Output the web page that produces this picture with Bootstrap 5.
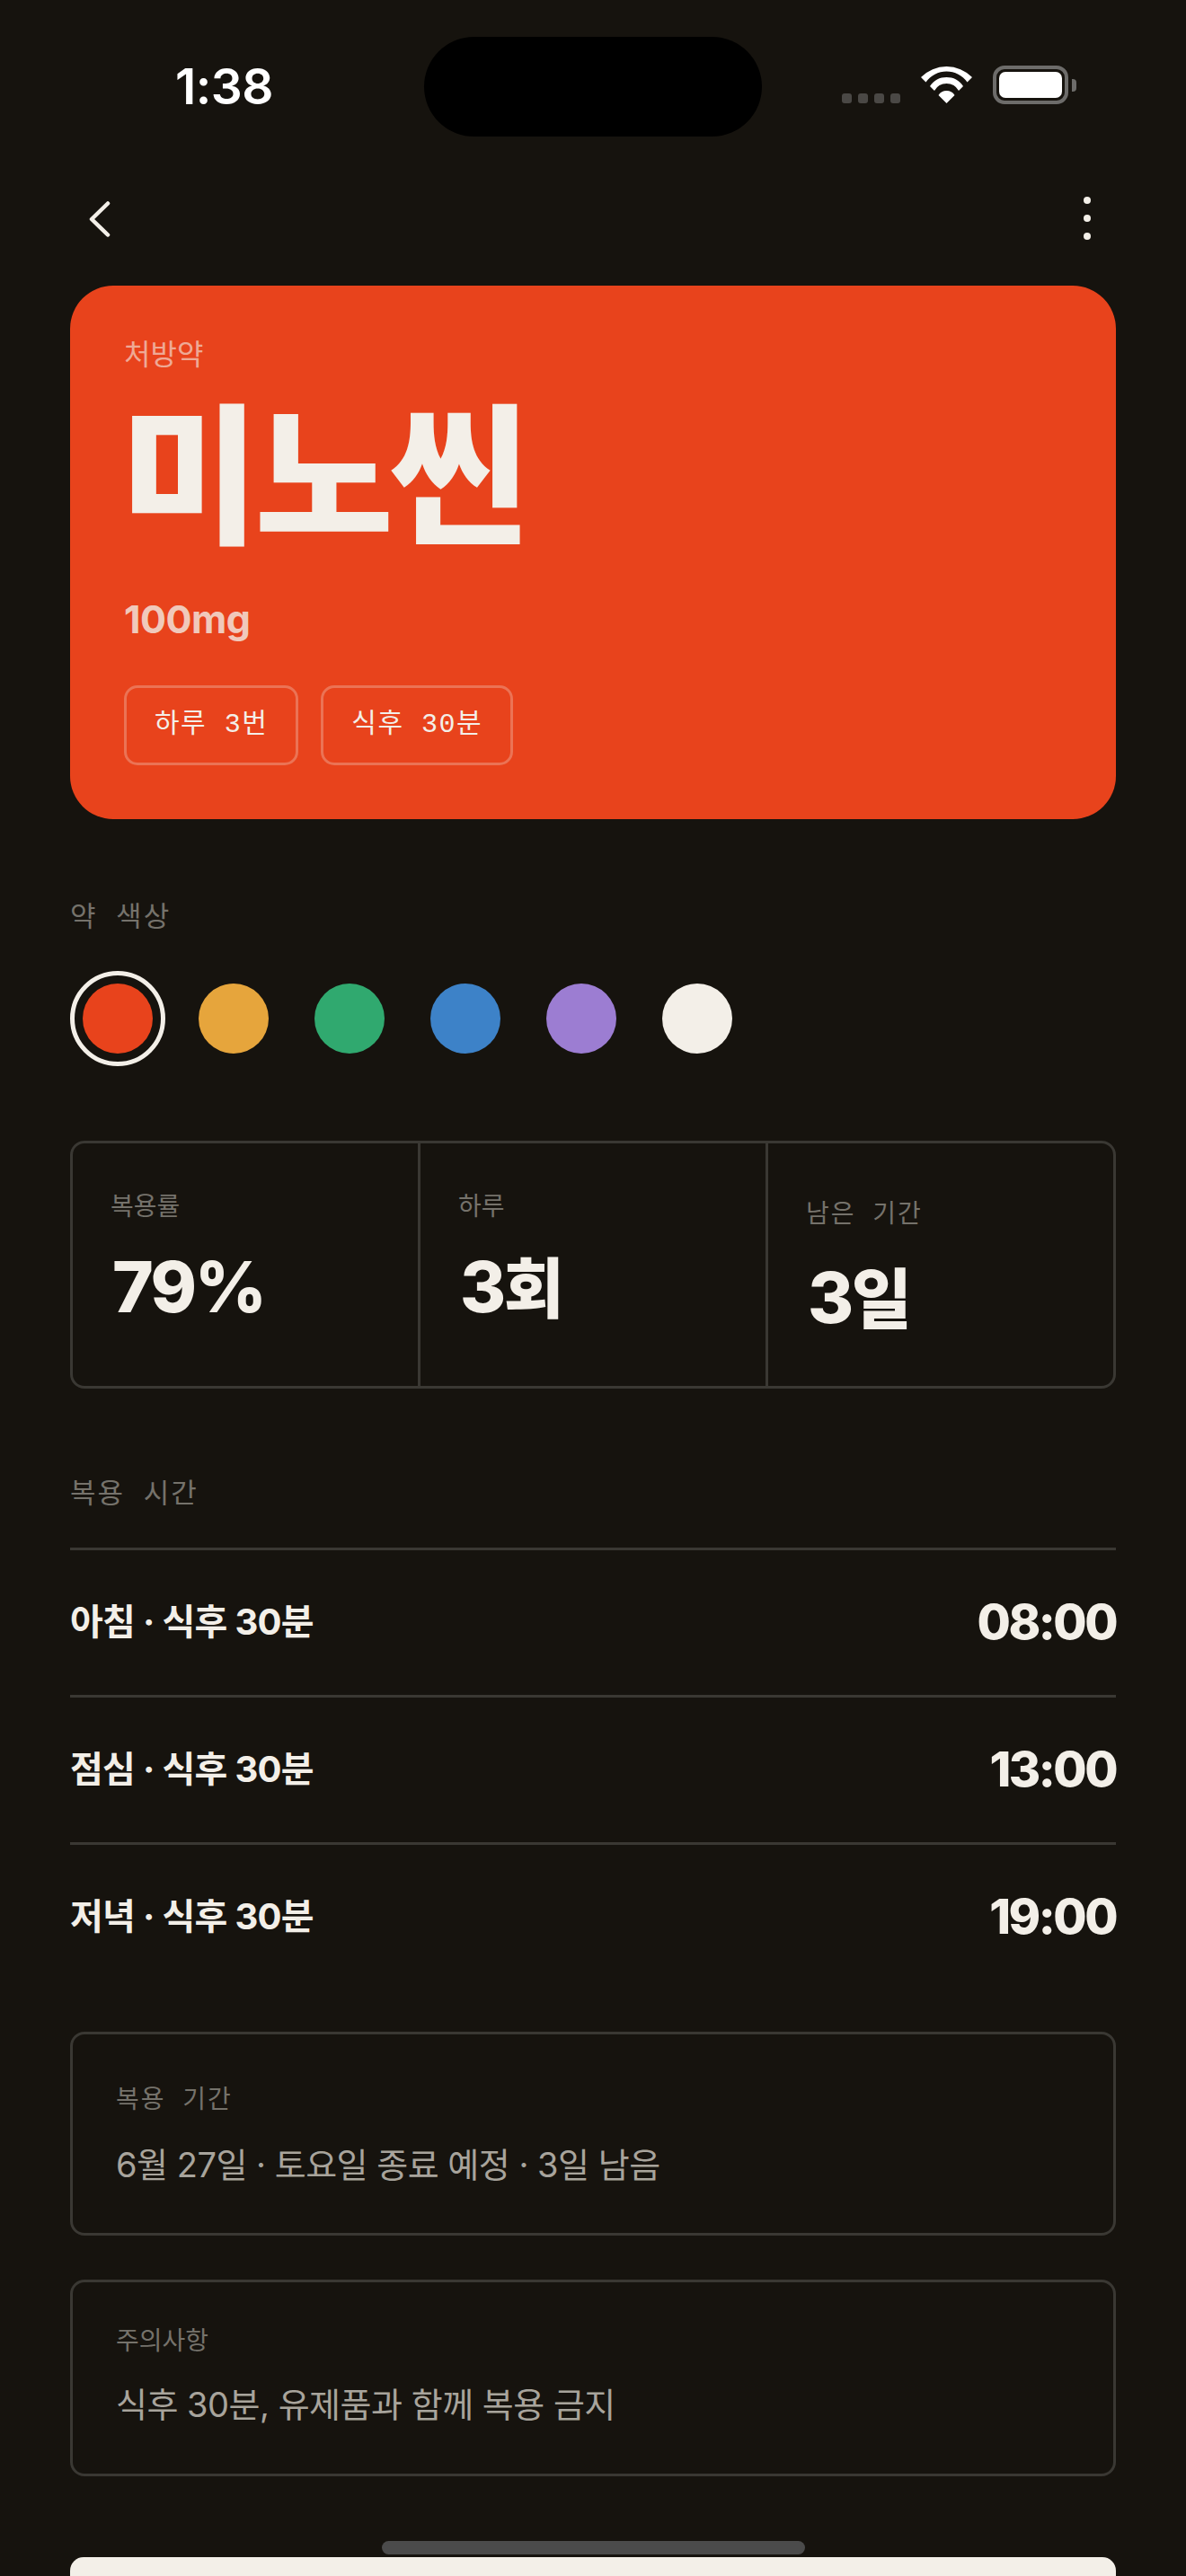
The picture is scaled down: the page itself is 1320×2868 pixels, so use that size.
<!DOCTYPE html>
<html lang="ko">
<head>
<meta charset="utf-8">
<title>미노씬</title>
<link href="https://cdn.jsdelivr.net/npm/bootstrap@5.3.0/dist/css/bootstrap.min.css" rel="stylesheet">
<style>
:root{--ink:#16130e;--cream:#f3efe8;--line:#3a3833;--mute:#75726b;--ko:"Inter","Noto Sans CJK KR",sans-serif;--mono:"Liberation Mono","Noto Sans CJK KR",monospace;}
html,body{background:var(--ink);margin:0;}
.phone{height:2868px;overflow:hidden;position:relative;background:var(--ink);color:var(--cream);font-family:var(--ko);padding:0 78px;}
.status-row{height:152px;margin:0 -78px;padding:41px 0 0 195px;}
.clock{width:277px;font-size:55px;font-weight:600;line-height:1;padding-top:28px;color:#fff;letter-spacing:-.5px;}
.island{width:376px;height:111px;border-radius:56px;background:#000;}
.status-icons{padding:32px 0 0 89px;}
.sig-dots{gap:7px;padding-top:31px;margin-right:23px;}
.sig-dots i{width:11px;height:11px;border-radius:3px;background:#4a4845;display:block;}
.batt{width:84px;height:43px;border:4px solid #6d6c6a;border-radius:13px;padding:3px;margin-left:23px;position:relative;}
.batt::before{content:"";display:block;height:100%;border-radius:7px;background:#fff;}
.batt-nub{width:5px;height:14px;background:#6d6c6a;border-radius:0 4px 4px 0;margin:15px 0 0 4px;}
.top-nav{height:166px;padding-top:72px;}
.back-ico{margin-left:21px;}
.kebab i{display:block;width:8px;height:8px;border-radius:50%;background:var(--cream);}
.kebab{gap:12px;margin:-5px 28px 0 0;}
.hero{height:594px;background:#e8431c;border-radius:48px;padding:57px 60px 0;}
.hero-tag{font-size:32px;line-height:40px;color:rgba(243,239,232,.62);}
.hero-name{font-size:168px;font-weight:900;line-height:160px;letter-spacing:-5px;margin:24px 0 0 -4px;font-family:"Noto Sans CJK KR",sans-serif;}
.hero-dose{font-size:43px;font-weight:700;line-height:50px;letter-spacing:-.5px;color:rgba(243,239,232,.8);margin-top:65px;}
.hero-pills{gap:25px;margin-top:49px;}
.dose-pill{height:89px;border:3px solid rgba(243,239,232,.28);border-radius:15px;font:400 30px/83px var(--mono);letter-spacing:1.5px;padding:0 31px;white-space:nowrap;}
.cap{font:400 31px/40px var(--mono);color:var(--mute);letter-spacing:2px;}
.sec-colors{margin-top:91px;}
.swatches{gap:51px;margin-top:38px;padding-left:14px;height:105px;align-items:center;}
.swatch{width:78px;height:78px;border-radius:50%;position:relative;}
.swatch-on::after{content:"";position:absolute;inset:-14px;border:5px solid var(--cream);border-radius:50%;}
.stat-box{margin-top:84px;height:276px;border:3px solid var(--line);border-radius:16px;}
.stat-col{flex:1 1 0;padding:50px 0 0 42px;border-left:3px solid var(--line);}
.stat-col:first-child{border-left:0;}
.stat-late{padding-top:61px;}
.stat-late .stat-val{margin-top:26px;}
.stat-cap{font:400 28px/40px var(--ko);color:var(--mute);}
.stat-val{font-size:78px;font-weight:800;line-height:90px;margin-top:25px;letter-spacing:-2.5px;margin-left:2px;}
.stat-unit{font-size:73px;}
.sec-times{margin-top:99px;}
.time-list{margin-top:38px;}
.time-row{height:164px;border-top:3px solid var(--line);padding:0 0 1px;}
.time-name{font-size:40px;font-weight:700;line-height:1;letter-spacing:-.7px;}
.time-at{font-size:54px;font-weight:800;line-height:1;letter-spacing:-2.5px;}
.memo{border:3px solid var(--line);border-radius:16px;padding:0 0 0 48px;}
.memo-a{height:227px;margin-top:47px;padding-top:55px;}
.memo-b{height:219px;margin-top:49px;padding-top:45px;}
.memo-cap{font:400 28px/40px var(--ko);color:var(--mute);}
.memo-mono{font-family:var(--mono);letter-spacing:2px;}
.memo-txt{font-size:38px;line-height:50px;letter-spacing:-.5px;color:#a8a49c;margin-top:25px;}
.memo-b .memo-txt{margin-top:26px;}
.cta{display:block;width:100%;height:150px;margin-top:90px;background:var(--cream);border:0;border-radius:15px;}
.home-bar{position:absolute;left:425px;top:2829px;width:471px;height:15px;border-radius:8px;background:#4b4b4b;}
</style>
</head>
<body>
<div class="phone">
  <div class="status-row d-flex align-items-start">
    <div class="clock">1:38</div>
    <div class="island"></div>
    <div class="status-icons d-flex align-items-start">
      <div class="sig-dots d-flex"><i></i><i></i><i></i><i></i></div>
      <svg width="57" height="42" viewBox="0 0 57 42" fill="#fff"><path d="M0 13L5.5 18.5A28 28 0 0 1 51.5 18.5L57 13A40 40 0 0 0 0 13Z"/><path d="M10 23L15 28A15.4 15.4 0 0 1 42 28L47 23A22 22 0 0 0 10 23Z"/><path d="M19.5 33L28.5 42L37.5 33A10.6 10.6 0 0 0 19.5 33Z"/></svg>
      <div class="batt"></div>
      <div class="batt-nub"></div>
    </div>
  </div>

  <div class="top-nav d-flex justify-content-between align-items-start">
    <svg class="back-ico" width="24" height="40" viewBox="0 0 24 40" fill="none" stroke="#f3efe8" stroke-width="4.5" stroke-linecap="round" stroke-linejoin="round"><path d="M21 2.5L3 20L21 37.5"/></svg>
    <div class="kebab d-flex flex-column"><i></i><i></i><i></i></div>
  </div>

  <section class="hero">
    <div class="hero-tag">처방약</div>
    <div class="hero-name">미노씬</div>
    <div class="hero-dose">100mg</div>
    <div class="hero-pills d-flex">
      <span class="dose-pill">하루 3번</span>
      <span class="dose-pill">식후 30분</span>
    </div>
  </section>

  <section class="sec-colors">
    <div class="cap">약 색상</div>
    <div class="swatches d-flex">
      <div class="swatch swatch-on" style="background:#e8431c"></div>
      <div class="swatch" style="background:#e6a53c"></div>
      <div class="swatch" style="background:#30a96f"></div>
      <div class="swatch" style="background:#3d82c8"></div>
      <div class="swatch" style="background:#9c7dd2"></div>
      <div class="swatch" style="background:#f3efe8"></div>
    </div>
  </section>

  <div class="stat-box d-flex">
    <div class="stat-col"><div class="stat-cap">복용률</div><div class="stat-val">79%</div></div>
    <div class="stat-col"><div class="stat-cap">하루</div><div class="stat-val">3<span class="stat-unit">회</span></div></div>
    <div class="stat-col stat-late"><div class="stat-cap memo-mono">남은 기간</div><div class="stat-val">3<span class="stat-unit">일</span></div></div>
  </div>

  <section class="sec-times">
    <div class="cap">복용 시간</div>
    <div class="time-list">
      <div class="time-row d-flex justify-content-between align-items-center"><span class="time-name">아침 · 식후 30분</span><span class="time-at">08:00</span></div>
      <div class="time-row d-flex justify-content-between align-items-center"><span class="time-name">점심 · 식후 30분</span><span class="time-at">13:00</span></div>
      <div class="time-row d-flex justify-content-between align-items-center"><span class="time-name">저녁 · 식후 30분</span><span class="time-at">19:00</span></div>
    </div>
  </section>

  <div class="memo memo-a"><div class="memo-cap memo-mono">복용 기간</div><div class="memo-txt">6월 27일 · 토요일 종료 예정 · 3일 남음</div></div>
  <div class="memo memo-b"><div class="memo-cap">주의사항</div><div class="memo-txt">식후 30분, 유제품과 함께 복용 금지</div></div>
  <button class="cta" type="button" aria-label="확인"></button>
  <div class="home-bar"></div>
</div>
<script src="https://cdn.jsdelivr.net/npm/bootstrap@5.3.0/dist/js/bootstrap.bundle.min.js"></script>
</body>
</html>
